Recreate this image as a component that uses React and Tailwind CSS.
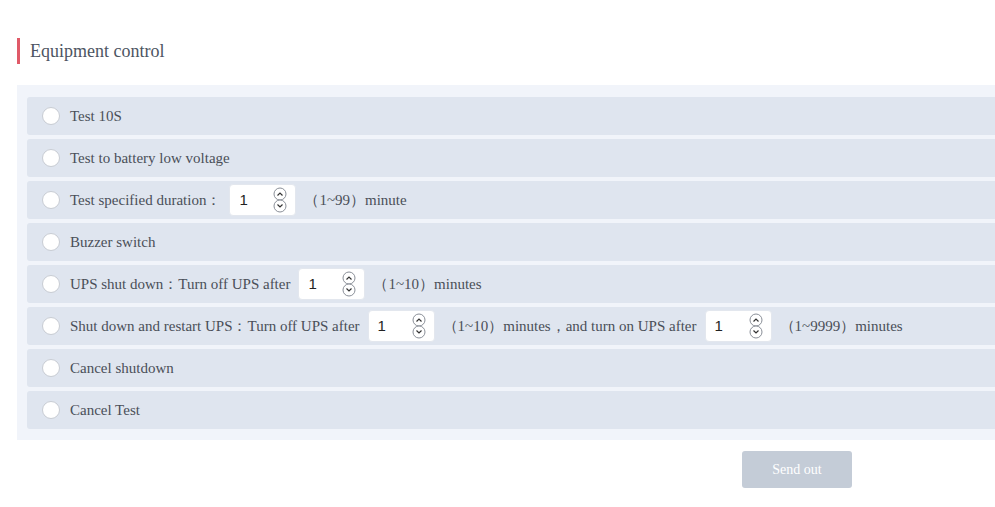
const serif = { fontFamily: '"Liberation Serif", "Times New Roman", serif' };

function Spinner() {
    return (
        <svg width="14" height="26" viewBox="0 0 14 26" className="shrink-0">
            <circle cx="7" cy="7" r="6" fill="white" stroke="#8a8f98" strokeWidth="1" />
            <path d="M4.5 8.5 L7 6 L9.5 8.5" fill="none" stroke="#333" strokeWidth="1.2" />
            <circle cx="7" cy="19" r="6" fill="white" stroke="#8a8f98" strokeWidth="1" />
            <path d="M4.5 17.5 L7 20 L9.5 17.5" fill="none" stroke="#333" strokeWidth="1.2" />
        </svg>
    );
}

function NumBox() {
    return (
        <div className="mx-2 flex h-[32px] w-[67px] items-center justify-between rounded-[4px] border border-[#e3e7ee] bg-white pl-[9px] pr-[8px]">
            <span className="font-['Liberation_Sans',Arial,sans-serif] text-[15px] text-[#222]">1</span>
            <Spinner />
        </div>
    );
}

function Row({ children }) {
    return (
        <div className="flex h-[38px] items-center rounded-[3px] bg-[#dfe5ef] pl-[15px] text-[15px] text-[#4a4f58]">
            <span className="mr-[10px] h-[18px] w-[18px] shrink-0 rounded-full border border-[#c8ccd3] bg-white" />
            <div className="flex items-center whitespace-nowrap">{children}</div>
        </div>
    );
}

export default function App() {
    return (
        <div className="h-screen w-screen overflow-hidden bg-white" style={serif}>
            <div className="pl-[17px] pt-[38px]">
                <div className="flex h-[26px] items-center border-l-[3px] border-[#e05a68] pl-[10px] text-[18px] text-[#4d5562]">
                    Equipment control
                </div>

                <div className="mt-[21px] w-[1000px] bg-[#f1f4fa] pb-[11px] pl-[10px] pt-[12px]">
                    <div className="flex flex-col gap-[4px]">
                        <Row>Test 10S</Row>
                        <Row>Test to battery low voltage</Row>
                        <Row>
                            Test specified duration：
                            <NumBox />
                            （1~99）minute
                        </Row>
                        <Row>Buzzer switch</Row>
                        <Row>
                            UPS shut down：Turn off UPS after
                            <NumBox />
                            （1~10）minutes
                        </Row>
                        <Row>
                            Shut down and restart UPS：Turn off UPS after
                            <NumBox />
                            （1~10）minutes，and turn on UPS after
                            <NumBox />
                            （1~9999）minutes
                        </Row>
                        <Row>Cancel shutdown</Row>
                        <Row>Cancel Test</Row>
                    </div>
                </div>

                <div className="flex pl-[725px] pt-[11px]">
                    <button
                        type="button"
                        className="h-[37px] w-[110px] rounded-[3px] bg-[#c4ccd7] text-[14px] text-white"
                    >
                        Send out
                    </button>
                </div>
            </div>
        </div>
    );
}
